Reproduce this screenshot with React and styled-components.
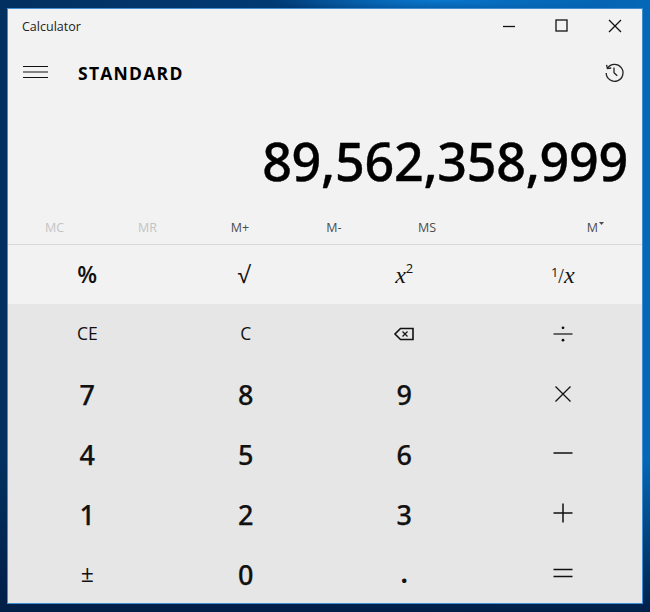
import React from "react";
import styled, { createGlobalStyle } from "styled-components";

const Global = createGlobalStyle`
  html, body { margin: 0; padding: 0; height: 100%; }
  body { font-family: "Open Sans", "Noto Sans", sans-serif; overflow: hidden; }
`;

const Desktop = styled.div`
  width: 650px;
  height: 612px;
  box-sizing: border-box;
  padding: 8px 7px 8px 7px;
  background:
    radial-gradient(ellipse 170px 14px at 440px 0px, #0a78cf 0%, rgba(10,120,207,0) 100%),
    linear-gradient(180deg, rgba(0,40,90,0) 75%, rgba(0,30,70,0.97) 100%),
    linear-gradient(90deg, #02305f 0%, #013a75 45%, #0460ad 85%, #0468b8 100%);
`;

const Win = styled.div`
  width: 636px;
  height: 596px;
  box-sizing: border-box;
  border: 1px solid #3f8fd0;
  background: #f2f2f2;
  display: flex;
  flex-direction: column;
  color: #000;
`;

const TitleBar = styled.div`
  height: 36px;
  box-sizing: border-box;
  padding: 0 1px 2px 14px;
  flex: none;
  display: flex;
  align-items: center;
`;

const TitleText = styled.div`
  flex: 1;
  font-size: 12.5px;
  color: #222;
`;

const WinBtn = styled.div`
  width: 53px;
  height: 34px;
  display: flex;
  align-items: center;
  justify-content: center;
  color: #111;
`;

const Header = styled.div`
  height: 54px;
  flex: none;
  display: flex;
  align-items: center;
  padding: 0 17px 0 15px;
`;

const Mode = styled.div`
  flex: 1;
  margin-left: 30px;
  padding-top: 2px;
  font-size: 17.5px;
  font-weight: 700;
  letter-spacing: 1.25px;
`;

const Display = styled.div`
  height: 111px;
  flex: none;
  display: flex;
  align-items: center;
  justify-content: flex-end;
  padding: 11px 14px 0 0;
  box-sizing: border-box;
  font-size: 52px;
  font-weight: 500;
  letter-spacing: -0.28px;
  -webkit-text-stroke: 0.4px #000;
  font-family: "Noto Sans", "Open Sans", sans-serif;
`;

const MemoryRow = styled.div`
  height: 35px;
  box-sizing: border-box;
  flex: none;
  display: grid;
  grid-template-columns: 93px 93px 92px 96px 90px 1fr;
  align-items: center;
  border-bottom: 1px solid #d8d8d8;
  font-size: 12.5px;
`;

const MemBtn = styled.div`
  text-align: center;
  color: ${(p) => (p.$off ? "#c4c4c4" : "#4c4c4c")};
  ${(p) => p.$last && "text-align: right; padding-right: 38px;"}
`;

const Caret = styled.svg`
  margin-left: 1px;
  vertical-align: 7px;
`;

const Grid = styled.div`
  flex: 1;
  display: grid;
  grid-template-columns: repeat(4, 1fr);
  grid-template-rows: 59px repeat(5, 1fr);
`;

const Key = styled.div`
  display: flex;
  align-items: center;
  justify-content: center;
  background: ${(p) => (p.$light ? "#f2f2f2" : "#e6e6e6")};
  font-size: ${(p) => p.$size || 26.5}px;
  font-weight: ${(p) => p.$weight || 600};
  color: #111;
  line-height: 1;
`;

const DigitKey = styled(Key)`
  font-family: "Noto Sans", "Open Sans", sans-serif;
  font-size: 27px;
  font-weight: 500;
  padding-top: 2px;
  -webkit-text-stroke: 0.25px #111;
`;

const MathText = styled.span`
  font-family: "Liberation Serif", serif;
  font-style: italic;
  font-weight: 400;
  font-size: 24px;
`;

const Sup = styled.sup`
  font-family: "Open Sans", sans-serif;
  font-style: normal;
  font-size: 13px;
  line-height: 0;
  position: relative;
  top: -1px;
`;

const One = styled.span`
  font-family: "Open Sans", sans-serif;
  font-style: normal;
  font-size: 13px;
  position: relative;
  top: -6px;
`;

const Slash = styled.span`
  font-size: 20px;
  font-style: normal;
`;

const Radical = styled.span`
  position: relative;
  left: -2px;
`;

const Line = (p) => (
  <svg width={p.w || 22} height={p.h || 22} viewBox={`0 0 ${p.w || 22} ${p.h || 22}`} fill="none" stroke="#111" strokeWidth={p.sw || 1.3}>
    {p.children}
  </svg>
);

export default function App() {
  return (
    <Desktop>
      <Global />
      <Win>
        <TitleBar>
          <TitleText>Calculator</TitleText>
          <WinBtn>
            <Line w={14} h={14}><path d="M1 7.5h12" /></Line>
          </WinBtn>
          <WinBtn>
            <Line w={14} h={14}><rect x="1" y="1" width="11" height="11" /></Line>
          </WinBtn>
          <WinBtn>
            <Line w={14} h={14}><path d="M1 1l12 12M13 1L1 13" /></Line>
          </WinBtn>
        </TitleBar>
        <Header>
          <Line w={25} h={14} sw={1.2}>
            <path d="M0 1.5h25M0 7h25M0 12.5h25" />
          </Line>
          <Mode>STANDARD</Mode>
          <svg width="21" height="21" viewBox="0 0 21 21" fill="none" stroke="#222" strokeWidth="1.3">
            <path d="M3.6 6.2A8.4 8.4 0 1 1 2.2 11" />
            <path d="M2.6 2.8l.8 3.8 3.8-.6" />
            <path d="M10 5.5v5.2l3.2 3" />
          </svg>
        </Header>
        <Display>89,562,358,999</Display>
        <MemoryRow>
          <MemBtn $off>MC</MemBtn>
          <MemBtn $off>MR</MemBtn>
          <MemBtn>M+</MemBtn>
          <MemBtn>M-</MemBtn>
          <MemBtn>MS</MemBtn>
          <MemBtn $last>M<Caret width="5" height="3" viewBox="0 0 5 3"><path d="M0 0h5L2.5 3z" fill="#4c4c4c" /></Caret></MemBtn>
        </MemoryRow>
        <Grid>
          <Key $light $size={23}>%</Key>
          <Key $light $size={23} $weight={400}><Radical>√</Radical></Key>
          <Key $light><MathText>x<Sup>2</Sup></MathText></Key>
          <Key $light><MathText><One>1</One><Slash>/</Slash>x</MathText></Key>

          <Key $size={17.5} $weight={400}>CE</Key>
          <Key $size={17.5} $weight={400}>C</Key>
          <Key>
            <Line w={22} h={16} sw={1.6}>
              <path d="M20 2.5v11H7.5L2 8l5.5-5.5z" />
              <path d="M9.5 5.5l5 5M14.5 5.5l-5 5" strokeWidth="1.2" />
            </Line>
          </Key>
          <Key>
            <svg width="22" height="22" viewBox="0 0 22 22" fill="#111" stroke="none">
              <rect x="1.5" y="10.4" width="19" height="1.2" />
              <circle cx="11" cy="4.8" r="1.4" />
              <circle cx="11" cy="17.2" r="1.4" />
            </svg>
          </Key>

          <DigitKey>7</DigitKey><DigitKey>8</DigitKey><DigitKey>9</DigitKey>
          <Key><Line><path d="M3.5 3.5l15 15M18.5 3.5l-15 15" /></Line></Key>
          <DigitKey>4</DigitKey><DigitKey>5</DigitKey><DigitKey>6</DigitKey>
          <Key><Line sw={1.5}><path d="M1.5 11h19" /></Line></Key>
          <DigitKey>1</DigitKey><DigitKey>2</DigitKey><DigitKey>3</DigitKey>
          <Key><Line sw={1.5}><path d="M1.5 11h19M11 1.5v19" /></Line></Key>
          <Key $size={23} $weight={400}>±</Key><DigitKey>0</DigitKey><Key $size={26} $weight={700}>.</Key>
          <Key><Line sw={1.4}><path d="M1.5 7.5h19M1.5 14.5h19" /></Line></Key>
        </Grid>
      </Win>
    </Desktop>
  );
}
